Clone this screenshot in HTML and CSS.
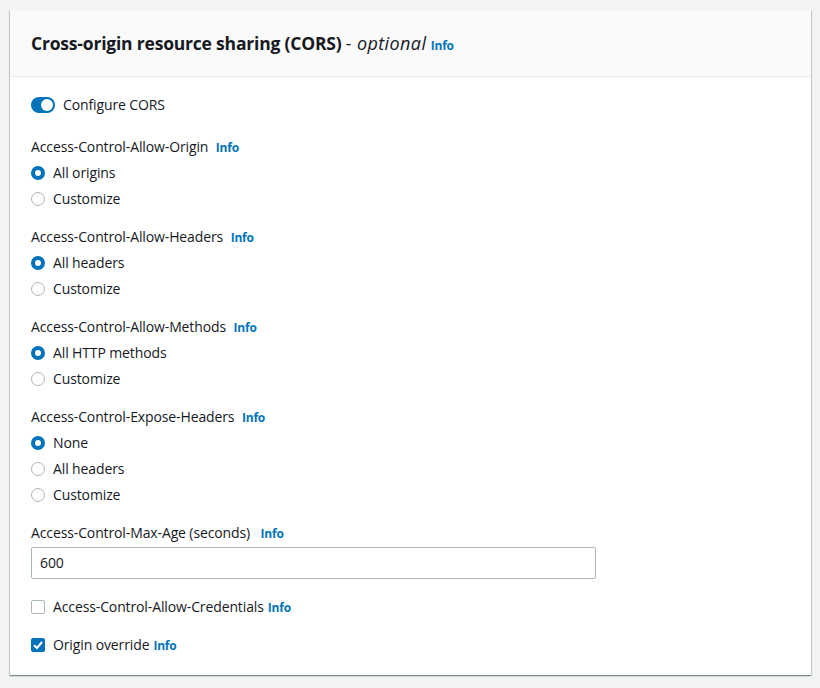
FILE: index.html
```html
<!DOCTYPE html>
<html>
<head>
<meta charset="utf-8">
<link rel="stylesheet" href="styles.css">
</head>
<body>
<div class="card">
  <div class="card-header">
    <h2 class="title">Cross-origin resource sharing (CORS) <span class="opt">- optional</span> <a class="info">Info</a></h2>
  </div>
  <div class="card-body">
    <div class="toggle-row">
      <span class="toggle"><span class="knob"></span></span>
      <span class="text">Configure CORS</span>
    </div>

    <div class="group first">
      <div class="label">Access-Control-Allow-Origin <a class="info">Info</a></div>
      <div class="radio-row"><span class="radio on"></span><span class="text">All origins</span></div>
      <div class="radio-row"><span class="radio"></span><span class="text">Customize</span></div>
    </div>

    <div class="group">
      <div class="label">Access-Control-Allow-Headers <a class="info">Info</a></div>
      <div class="radio-row"><span class="radio on"></span><span class="text">All headers</span></div>
      <div class="radio-row"><span class="radio"></span><span class="text">Customize</span></div>
    </div>

    <div class="group">
      <div class="label">Access-Control-Allow-Methods <a class="info">Info</a></div>
      <div class="radio-row"><span class="radio on"></span><span class="text">All HTTP methods</span></div>
      <div class="radio-row"><span class="radio"></span><span class="text">Customize</span></div>
    </div>

    <div class="group">
      <div class="label">Access-Control-Expose-Headers <a class="info">Info</a></div>
      <div class="radio-row"><span class="radio on"></span><span class="text">None</span></div>
      <div class="radio-row"><span class="radio"></span><span class="text">All headers</span></div>
      <div class="radio-row"><span class="radio"></span><span class="text">Customize</span></div>
    </div>

    <div class="group">
      <div class="label">Access-Control-Max-Age (seconds) <a class="info wide">Info</a></div>
      <div class="input">600</div>
    </div>

    <div class="check-row">
      <span class="checkbox"></span><span class="text">Access-Control-Allow-Credentials</span> <a class="info">Info</a>
    </div>
    <div class="check-row">
      <span class="checkbox on"><svg width="14" height="14" viewBox="0 0 14 14"><path d="M3 7.2 L6 10 L11 4" fill="none" stroke="#fff" stroke-width="2"/></svg></span><span class="text">Origin override</span> <a class="info">Info</a>
    </div>
  </div>
</div>
</body>
</html>
```
FILE: styles.css
```css
html, body { margin: 0; padding: 0; }
body {
  background: #f2f3f3;
  font-family: "Open Sans", "Liberation Sans", sans-serif;
  color: #16191f;
  font-size: 14px;
  letter-spacing: -0.12px;
  padding: 10px 9px 13px 10px;
}
.card {
  background: #fff;
  box-shadow: 0 1px 1px 0 rgba(0,28,36,0.3), 1px 1px 1px 0 rgba(0,28,36,0.15), -1px 1px 1px 0 rgba(0,28,36,0.15);
  height: 665px;
  box-sizing: border-box;
}
.card-header {
  background: #fafafa;
  border-bottom: 1px solid #eaeded;
  height: 67px;
  box-sizing: border-box;
  padding: 21px 20px 0 21px;
}
.title {
  margin: 0;
  font-size: 17.5px;
  font-weight: 700;
  line-height: 24px;
  letter-spacing: -0.2px;
}
.opt { font-style: italic; font-weight: 400; font-size: 18px; letter-spacing: 0.4px; }
.info {
  color: #0073bb;
  font-size: 12px;
  font-weight: 700;
  text-decoration: none;
  letter-spacing: -0.2px;
}
.card-body { padding: 18px 21px 0 21px; }
.toggle-row { display: flex; align-items: center; height: 20px; }
.toggle {
  width: 24px; height: 16px; border-radius: 8px; background: #0073bb;
  position: relative; margin-right: 8px;
}
.knob {
  position: absolute; right: 2px; top: 2px; width: 12px; height: 12px; border-radius: 50%; background: #fff;
}
.text { line-height: 20px; }
.group { margin-top: 18px; }
.group.first { margin-top: 22px; }
.label { line-height: 20px; height: 20px; margin-bottom: 6px; }
.label .info { margin-left: 4px; }
.label .info.wide { margin-left: 7px; }
.radio-row { display: flex; align-items: center; height: 20px; margin-bottom: 6px; }
.radio-row:last-child { margin-bottom: 0; }
.radio {
  width: 14px; height: 14px; border-radius: 50%; box-sizing: border-box;
  border: 1px solid #aab7b8; margin-right: 8px; background: #fff;
}
.radio.on { border: 4px solid #0073bb; }
.input {
  margin-top: -2px;
  width: 565px; height: 32px; box-sizing: border-box;
  border: 1px solid #aab7b8; border-radius: 2px;
  padding: 0 8px; line-height: 30px;
}
.check-row { display: flex; align-items: center; height: 20px; margin-top: 18px; }
.check-row + .check-row { margin-top: 18px; }
.check-row .info { margin-left: 4px; }
.checkbox {
  width: 14px; height: 14px; box-sizing: border-box; border: 1px solid #aab7b8; border-radius: 2px;
  margin-right: 8px; display: inline-flex;
}
.checkbox.on { background: #0073bb; border-color: #0073bb; }
.checkbox svg { margin: -1px; }
```
